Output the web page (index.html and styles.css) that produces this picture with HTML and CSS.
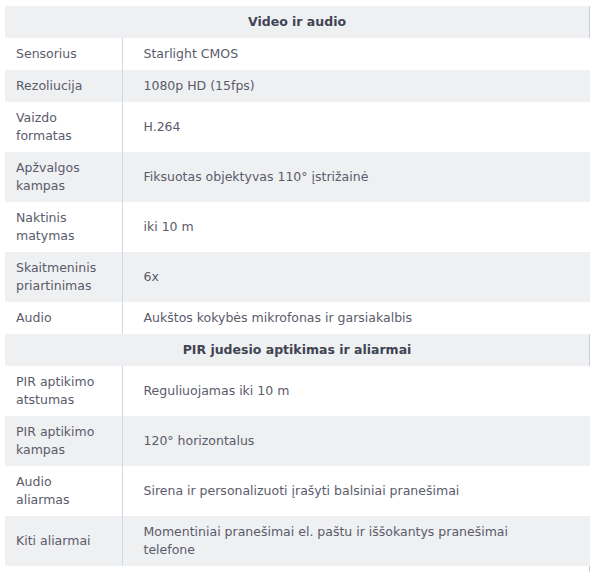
FILE: index.html
```html
<!DOCTYPE html>
<html lang="lt">
<head>
<meta charset="utf-8">
<title>Specifikacijos</title>
<link rel="stylesheet" href="styles.css">
</head>
<body>
<div class="wrap">
<table class="spec">
  <colgroup><col class="c1"><col class="c2"></colgroup>
  <tbody>
    <tr class="sec"><th colspan="2">Video ir audio</th></tr>
    <tr><td class="k">Sensorius</td><td class="v">Starlight CMOS</td></tr>
    <tr class="alt"><td class="k">Rezoliucija</td><td class="v">1080p HD (15fps)</td></tr>
    <tr><td class="k">Vaizdo formatas</td><td class="v">H.264</td></tr>
    <tr class="alt"><td class="k">Apžvalgos kampas</td><td class="v">Fiksuotas objektyvas 110° įstrižainė</td></tr>
    <tr><td class="k">Naktinis matymas</td><td class="v">iki 10 m</td></tr>
    <tr class="alt"><td class="k">Skaitmeninis priartinimas</td><td class="v">6x</td></tr>
    <tr><td class="k">Audio</td><td class="v">Aukštos kokybės mikrofonas ir garsiakalbis</td></tr>
    <tr class="sec"><th colspan="2">PIR judesio aptikimas ir aliarmai</th></tr>
    <tr><td class="k">PIR aptikimo atstumas</td><td class="v">Reguliuojamas iki 10 m</td></tr>
    <tr class="alt"><td class="k">PIR aptikimo kampas</td><td class="v">120° horizontalus</td></tr>
    <tr><td class="k">Audio aliarmas</td><td class="v">Sirena ir personalizuoti įrašyti balsiniai pranešimai</td></tr>
    <tr class="alt"><td class="k">Kiti aliarmai</td><td class="v">Momentiniai pranešimai el. paštu ir iššokantys pranešimai telefone</td></tr>
  </tbody>
</table>
<div class="tail"></div>
</div>
</body>
</html>
```

FILE: styles.css
```css
html, body {
  margin: 0;
  padding: 0;
  background: #ffffff;
}
.wrap {
  padding: 6px 3px 0 5px;
  font-family: "DejaVu Sans", sans-serif;
  font-size: 12.5px;
  color: #5a5b6b;
}
.spec {
  width: 585px;
  border-collapse: collapse;
  table-layout: fixed;
}
.c1 {
  width: 117px;
}
.spec td, .spec th {
  line-height: 18px;
  padding: 7px 0;
  vertical-align: middle;
}
.sec th {
  background: #eff0f2;
  color: #3f4453;
  font-weight: bold;
  text-align: center;
  padding: 7px 0;
  border-right: 1px solid #c9ced8;
}
.alt td {
  background: #eff0f2;
}
.spec .k {
  padding-left: 11px;
  padding-right: 14px;
  border-right: 1px solid #d3d7df;
}
.spec .v {
  padding-left: 21px;
  padding-right: 40px;
}
.tail {
  width: 1px;
  height: 6px;
  margin-left: 584px;
  background: #c9ced8;
}
```
